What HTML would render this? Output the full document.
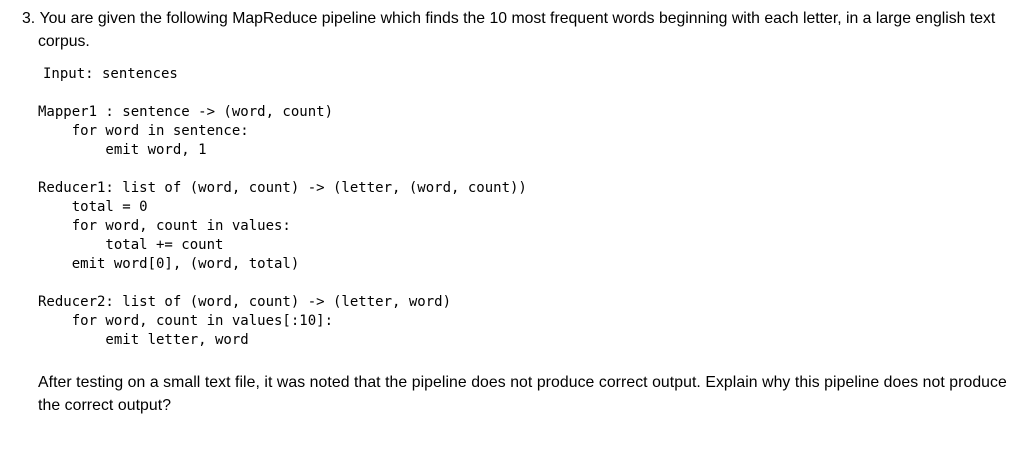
<!DOCTYPE html>
<html><head><style>
body{margin:0;width:1026px;height:474px;background:#fff;color:#000;position:relative;overflow:hidden}
.t{position:absolute;font-family:"Liberation Sans",Arial,sans-serif;font-size:15.8px;white-space:nowrap}
pre{position:absolute;margin:0;font-family:"DejaVu Sans Mono",monospace;font-size:14px;line-height:19px;left:38px}
</style></head><body>
<div class="t" style="left:22px;top:10px">3.&nbsp;You are given the following MapReduce pipeline which finds the 10 most frequent words beginning with each letter, in a large english text</div>
<div class="t" style="left:38px;top:33px">corpus.</div>
<pre style="left:43px;top:65px">Input: sentences</pre>
<pre style="top:103px">Mapper1 : sentence -> (word, count)
    for word in sentence:
        emit word, 1

Reducer1: list of (word, count) -> (letter, (word, count))
    total = 0
    for word, count in values:
        total += count
    emit word[0], (word, total)

Reducer2: list of (word, count) -> (letter, word)
    for word, count in values[:10]:
        emit letter, word</pre>
<div class="t" style="left:38px;top:374px;letter-spacing:0.07px">After testing on a small text file, it was noted that the pipeline does not produce correct output. Explain why this pipeline does not produce</div>
<div class="t" style="left:38px;top:397px;letter-spacing:0.07px">the correct output?</div>
</body></html>
